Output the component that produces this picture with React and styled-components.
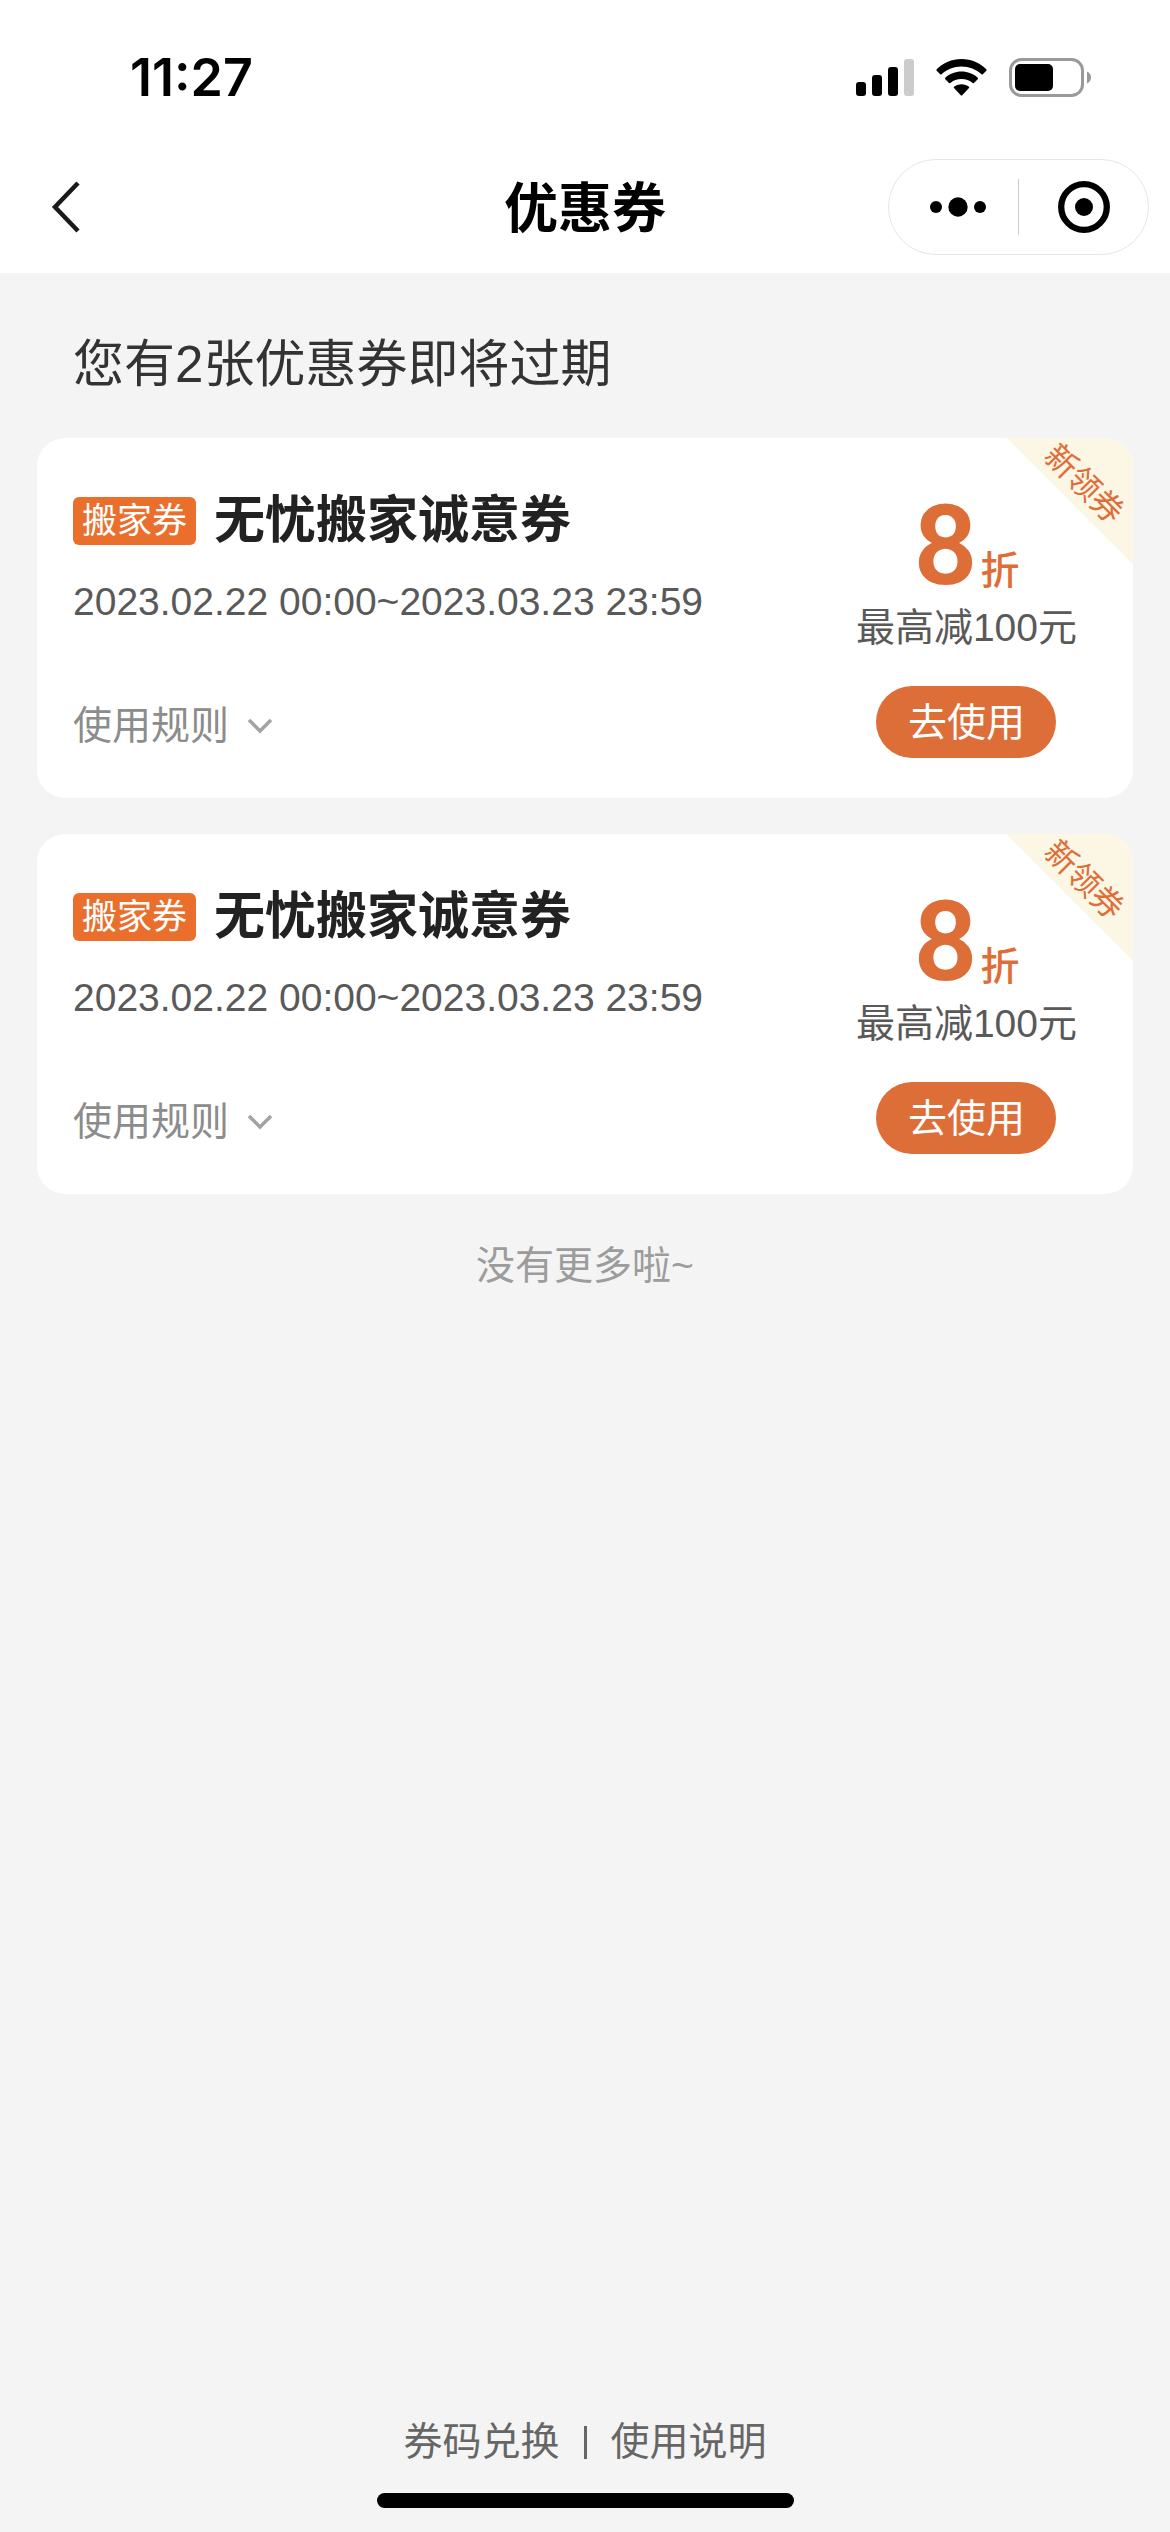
import React from 'react';
import styled, { createGlobalStyle } from 'styled-components';

const Colors = {
  page: '#f4f4f4',
  white: '#ffffff',
  black: '#000000',
  orange: '#de6e38',
  tag: '#ea6f2d',
  cream: '#fcf6e5',
  heading: '#222222',
  notice: '#333333',
  text: '#595959',
  muted: '#8c8c8c',
  faint: '#9c9c9c',
};

const GlobalStyle = createGlobalStyle`
  * {
    box-sizing: border-box;
  }

  body {
    margin: 0;
    background: ${Colors.page};
    font-family: 'Liberation Sans', 'Noto Sans CJK SC', sans-serif;
    font-size: 39px;
    line-height: 48px;
    color: ${Colors.text};
  }

  button {
    border: 0;
    padding: 0;
    background: none;
    font: inherit;
    color: inherit;
    cursor: pointer;
  }

  svg {
    display: block;
  }
`;

const Page = styled.div`
  min-height: 100vh;
  display: flex;
  flex-direction: column;
`;

const Top = styled.header`
  background: ${Colors.white};
`;

const StatusBar = styled.div`
  height: 141px;
  padding: 15px 78px 0 130px;
  display: flex;
  align-items: center;
  justify-content: space-between;
`;

const Time = styled.time`
  font-family: Inter, sans-serif;
  font-size: 52px;
  font-weight: 600;
  color: ${Colors.black};
`;

const StatusIcons = styled.div`
  display: flex;
  align-items: center;
  gap: 22px;
`;

const NavBar = styled.nav`
  height: 132px;
  padding: 0 21px;
  display: grid;
  grid-template-columns: 1fr auto 1fr;
  align-items: center;
`;

const BackButton = styled.button`
  justify-self: start;
  padding: 12px 30px;
`;

const PageTitle = styled.h1`
  margin: 0;
  padding-top: 3px;
  font-size: 54px;
  font-weight: 600;
  line-height: 72px;
  color: ${Colors.black};
`;

const Capsule = styled.div`
  justify-self: end;
  width: 261px;
  height: 96px;
  display: flex;
  align-items: center;
  border: 1px solid #e6e6e6;
  border-radius: 48px;
`;

const CapsuleButton = styled.button`
  flex: 1;
  height: 56px;
  display: flex;
  align-items: center;
  justify-content: center;

  & + & {
    border-left: 1px solid #cccccc;
  }
`;

const Content = styled.main`
  padding: 56px 37px 0;
`;

const Notice = styled.p`
  margin: 0 0 37px;
  padding: 0 36px;
  font-size: 51px;
  line-height: 72px;
  color: ${Colors.notice};
`;

const CouponList = styled.ul`
  margin: 0;
  padding: 0;
  list-style: none;
  display: flex;
  flex-direction: column;
  gap: 36px;
`;

const Card = styled.li`
  position: relative;
  overflow: hidden;
  display: flex;
  justify-content: space-between;
  padding: 50px 36px 40px;
  border-radius: 28px;
  background: ${Colors.white};
`;

const Details = styled.div`
  display: flex;
  flex-direction: column;
  align-items: flex-start;
  padding-bottom: 8px;
`;

const TitleRow = styled.div`
  display: flex;
  align-items: center;
  gap: 18px;
  margin-bottom: 24px;
`;

const Tag = styled.span`
  padding: 0 9px;
  border-radius: 6px;
  background: ${Colors.tag};
  font-size: 35px;
  line-height: 48px;
  color: ${Colors.white};
`;

const CouponName = styled.h2`
  margin: 0;
  font-size: 51px;
  font-weight: 600;
  line-height: 66px;
  color: ${Colors.heading};
`;

const RulesButton = styled.button`
  display: flex;
  align-items: center;
  gap: 18px;
  margin-top: auto;
  color: ${Colors.muted};
`;

const Offer = styled.div`
  display: flex;
  flex-direction: column;
  align-items: center;
  padding-right: 20px;
`;

const Amount = styled.div`
  height: 116px;
  display: flex;
  align-items: baseline;
  gap: 3px;
  font-weight: 500;
  color: ${Colors.orange};
`;

const Figure = styled.span`
  font-family: Roboto, sans-serif;
  font-size: 112px;
  font-weight: 600;
  line-height: 116px;
`;

const UseButton = styled.button`
  width: 180px;
  height: 72px;
  margin-top: 34px;
  padding-top: 2px;
  border-radius: 36px;
  background: ${Colors.orange};
  color: ${Colors.white};
`;

const Corner = styled.div`
  position: absolute;
  top: 0;
  right: 0;
  width: 126px;
  height: 126px;
  display: flex;
  align-items: center;
  justify-content: center;
  padding: 0 0 34px 28px;
  background: linear-gradient(to top right, transparent 50%, ${Colors.cream} 50%);
`;

const CornerText = styled.span`
  flex: none;
  font-size: 32px;
  line-height: 32px;
  color: ${Colors.orange};
  transform: rotate(45deg);
`;

const ListEnd = styled.p`
  margin: 48px 0 0;
  text-align: center;
  color: ${Colors.faint};
`;

const Footer = styled.footer`
  margin-top: auto;
  padding: 48px 0 24px;
  display: flex;
  flex-direction: column;
  align-items: center;
  gap: 27px;
`;

const FooterLinks = styled.div`
  display: flex;
  align-items: center;
  gap: 24px;
`;

const FooterLink = styled.a`
  color: #666666;
  text-decoration: none;
`;

const Divider = styled.span`
  width: 3px;
  height: 33px;
  background: #666666;
`;

const HomeIndicator = styled.div`
  width: 417px;
  height: 15px;
  border-radius: 8px;
  background: ${Colors.black};
`;

const SignalIcon = () => (
  <svg width="58" height="38" viewBox="0 0 58 38" aria-hidden="true">
    <rect x="0" y="23" width="10" height="14" rx="3" />
    <rect x="16" y="16" width="10" height="21" rx="3" />
    <rect x="32" y="8" width="10" height="29" rx="3" />
    <rect x="48" y="0" width="10" height="37" rx="3" fill="#cccccc" />
  </svg>
);

const WifiIcon = () => (
  <svg width="51" height="38" viewBox="0 0 51 38" aria-hidden="true">
    <path d="M25.500 0C35.200 0 44 3.800 50.300 10.200Q51 11 50.300 11.800L46.800 15.300Q46.200 15.900 45.500 15.300C40.200 10.300 33.200 7.400 25.500 7.400S10.800 10.300 5.500 15.300Q4.800 15.900 4.200 15.300L0.700 11.800Q0 11 0.700 10.200C7 3.800 15.800 0 25.500 0Z" />
    <path d="M25.500 12.600C31.700 12.600 37.400 14.900 41.700 18.800Q42.400 19.500 41.700 20.200L38 23.900Q37.400 24.500 36.700 23.900C33.700 21.400 29.800 19.900 25.500 19.900S17.300 21.400 14.300 23.900Q13.600 24.500 13 23.900L9.300 20.200Q8.600 19.500 9.300 18.800C13.600 14.900 19.300 12.600 25.500 12.600Z" />
    <path d="M25.500 25.200C28.300 25.200 30.900 26.100 33 27.700Q33.700 28.400 33 29.100L26.200 36.300Q25.500 37.200 24.800 36.300L18 29.100Q17.300 28.400 18 27.700C20.100 26.100 22.700 25.200 25.500 25.200Z" />
  </svg>
);

const BatteryIcon = () => (
  <svg width="83" height="40" viewBox="0 0 83 40" aria-hidden="true">
    <rect x="1.500" y="1.500" width="72" height="36" rx="11" fill="none" stroke="#999999" strokeWidth="3" />
    <rect x="6" y="6" width="38" height="27" rx="5" />
    <path d="M78 13.500C80.400 14.500 82 16.800 82 19.500S80.400 24.500 78 25.500Z" fill="#999999" />
  </svg>
);

const BackIcon = () => (
  <svg width="30" height="52" viewBox="0 0 30 52" aria-hidden="true">
    <path d="M27 2L4 26L27 50" fill="none" stroke="#1a1a1a" strokeWidth="4.500" />
  </svg>
);

const MoreIcon = () => (
  <svg width="66" height="20" viewBox="0 0 66 20" aria-hidden="true">
    <circle cx="15" cy="10" r="6" />
    <circle cx="37" cy="10" r="9.700" />
    <circle cx="59" cy="10" r="6" />
  </svg>
);

const CloseIcon = () => (
  <svg width="52" height="52" viewBox="0 0 52 52" aria-hidden="true">
    <circle cx="26" cy="26" r="22.800" fill="none" stroke="#000000" strokeWidth="6.300" />
    <circle cx="26" cy="26" r="9" />
  </svg>
);

const ChevronDown = () => (
  <svg width="26" height="16" viewBox="0 0 26 16" aria-hidden="true">
    <path d="M2 2L13 13L24 2" fill="none" stroke="#a3a3a3" strokeWidth="3.500" />
  </svg>
);

const coupons = [
  {
    id: 1,
    tag: '搬家券',
    name: '无忧搬家诚意券',
    period: '2023.02.22 00:00~2023.03.23 23:59',
    discount: '8',
    limit: '最高减100元',
    corner: '新领券',
  },
  {
    id: 2,
    tag: '搬家券',
    name: '无忧搬家诚意券',
    period: '2023.02.22 00:00~2023.03.23 23:59',
    discount: '8',
    limit: '最高减100元',
    corner: '新领券',
  },
];

const Coupon = ({ tag, name, period, discount, limit, corner }) => (
  <Card>
    <Details>
      <TitleRow>
        <Tag>{tag}</Tag>
        <CouponName>{name}</CouponName>
      </TitleRow>
      <span>{period}</span>
      <RulesButton type="button">
        使用规则
        <ChevronDown />
      </RulesButton>
    </Details>
    <Offer>
      <Amount>
        <Figure>{discount}</Figure>
        <span>折</span>
      </Amount>
      <span>{limit}</span>
      <UseButton type="button">去使用</UseButton>
    </Offer>
    <Corner>
      <CornerText>{corner}</CornerText>
    </Corner>
  </Card>
);

const App = () => {
  return (
    <>
      <GlobalStyle />
      <Page lang="zh-CN">
        <Top>
          <StatusBar>
            <Time>11:27</Time>
            <StatusIcons>
              <SignalIcon />
              <WifiIcon />
              <BatteryIcon />
            </StatusIcons>
          </StatusBar>
          <NavBar>
            <BackButton type="button" aria-label="返回">
              <BackIcon />
            </BackButton>
            <PageTitle>优惠券</PageTitle>
            <Capsule>
              <CapsuleButton type="button" aria-label="更多">
                <MoreIcon />
              </CapsuleButton>
              <CapsuleButton type="button" aria-label="关闭">
                <CloseIcon />
              </CapsuleButton>
            </Capsule>
          </NavBar>
        </Top>
        <Content>
          <Notice>您有{coupons.length}张优惠券即将过期</Notice>
          <CouponList>
            {coupons.map((coupon) => (
              <Coupon key={coupon.id} {...coupon} />
            ))}
          </CouponList>
          <ListEnd>没有更多啦~</ListEnd>
        </Content>
        <Footer>
          <FooterLinks>
            <FooterLink href="#redeem">券码兑换</FooterLink>
            <Divider />
            <FooterLink href="#help">使用说明</FooterLink>
          </FooterLinks>
          <HomeIndicator />
        </Footer>
      </Page>
    </>
  );
};

export default App;
